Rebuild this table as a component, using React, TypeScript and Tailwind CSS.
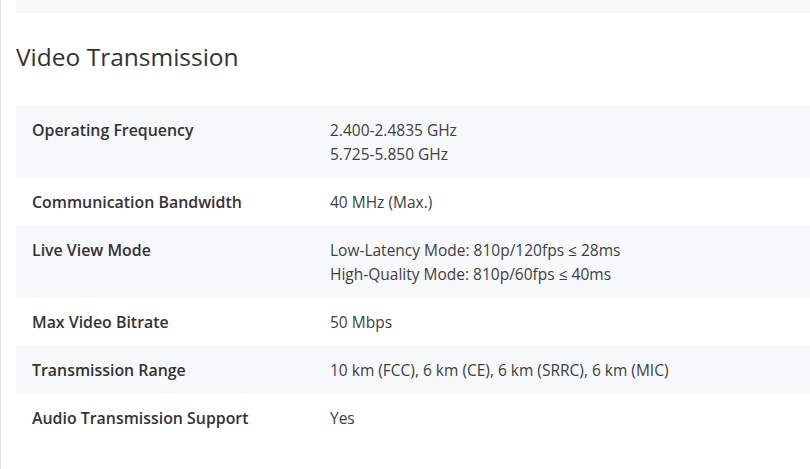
import React from 'react';

const rows: { label: string; values: string[] }[] = [
  { label: 'Operating Frequency', values: ['2.400-2.4835 GHz', '5.725-5.850 GHz'] },
  { label: 'Communication Bandwidth', values: ['40 MHz (Max.)'] },
  { label: 'Live View Mode', values: ['Low-Latency Mode: 810p/120fps ≤ 28ms', 'High-Quality Mode: 810p/60fps ≤ 40ms'] },
  { label: 'Max Video Bitrate', values: ['50 Mbps'] },
  { label: 'Transmission Range', values: ['10 km (FCC), 6 km (CE), 6 km (SRRC), 6 km (MIC)'] },
  { label: 'Audio Transmission Support', values: ['Yes'] },
];

export default function App() {
  return (
    <div
      className="min-h-[469px] w-[810px] border-l border-[#e3e3e3] bg-white pl-[15px] text-[#3b3b3b]"
      style={{ fontFamily: '"Open Sans", "Noto Sans", sans-serif' }}
    >
      <div className="h-[13px] bg-[#f7f8fa]" />
      <h2 className="pt-[30px] pb-[35px] text-[24.5px] leading-[28px] font-normal text-[#333]">Video Transmission</h2>
      <div className="flex flex-col">
        {rows.map((row, i) => (
          <div
            key={row.label}
            className={`grid grid-cols-[314px_1fr] py-3 text-[15.5px] leading-6 ${i % 2 === 0 ? 'bg-[#f7f8fa]' : 'bg-white'}`}
          >
            <div className="pl-4 text-[15.9px] font-semibold text-[#333]">{row.label}</div>
            <div className="text-[#404040]">
              {row.values.map((v) => (
                <div key={v}>{v}</div>
              ))}
            </div>
          </div>
        ))}
      </div>
    </div>
  );
}
